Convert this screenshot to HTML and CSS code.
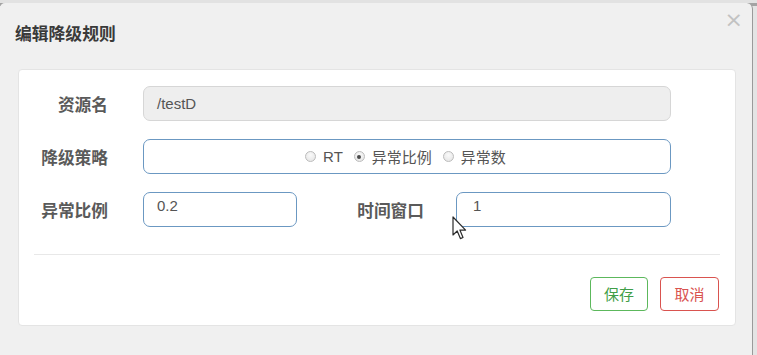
FILE: index.html
```html
<!DOCTYPE html>
<html lang="zh-CN">
<head>
<meta charset="utf-8">
<title>编辑降级规则</title>
<link rel="stylesheet" href="styles.css">
</head>
<body>
<div class="frame">
  <div class="dialog">
    <div class="header">
      <h4 class="title">编辑降级规则</h4>
      <span class="close">&times;</span>
    </div>
    <div class="panel">
      <div class="form">
        <div class="row">
          <label class="label">资源名</label>
          <div class="input disabled">/testD</div>
        </div>
        <div class="row">
          <label class="label">降级策略</label>
          <div class="input focus radios">
            <span class="radio"></span><span class="rtext">RT</span>
            <span class="radio checked"></span><span class="rtext">异常比例</span>
            <span class="radio"></span><span class="rtext">异常数</span>
          </div>
        </div>
        <div class="row">
          <label class="label">异常比例</label>
          <div class="input focus small top">0.2</div>
          <label class="label label2">时间窗口</label>
          <div class="input focus grow top">1</div>
        </div>
      </div>
      <div class="divider"></div>
      <div class="footer">
        <button class="btn save">保存</button>
        <button class="btn cancel">取消</button>
      </div>
    </div>
  </div>
  <svg class="cursor" width="16" height="25" viewBox="0 0 16 25">
    <path d="M1 1 L1 19 L5.2 15 L8.4 22.6 L11 21.5 L7.9 14.1 L13.6 14.1 Z" fill="#fff" stroke="#2b2b2b" stroke-width="1.2" stroke-linejoin="round"/>
  </svg>
</div>
</body>
</html>
```

FILE: styles.css
```css
* { box-sizing: border-box; }
html, body { margin: 0; padding: 0; }
body {
  width: 757px;
  height: 355px;
  overflow: hidden;
  background: #e2e2e2;
  font-family: "Liberation Sans", "Noto Sans CJK SC", sans-serif;
}
.frame {
  position: relative;
  width: 757px;
  height: 355px;
  background: linear-gradient(to bottom, #a3a3a3 0, #a3a3a3 3px, #e4e4e4 3px);
}
.dialog {
  position: relative;
  width: 753px;
  height: 352px;
  margin-top: 3px;
  background: #f0f0f0;
  border-right: 1px solid #9a9a9a;
  border-top-right-radius: 6px;
  border-top-left-radius: 5px;
}
.header {
  height: 66px;
  display: flex;
  align-items: center;
  padding-left: 15px;
  position: relative;
}
.title {
  margin: 0;
  margin-top: -6px;
  font-size: 16.8px;
  font-weight: 700;
  color: #3a3a3a;
}
.close {
  position: absolute;
  right: 9px;
  top: 4px;
  font-size: 22px;
  line-height: 26px;
  color: #c2c2c2;
  font-family: "DejaVu Sans", sans-serif;
}
.panel {
  margin: 0 16px 0 18px;
  height: 257px;
  background: #fff;
  border: 1px solid #e4e4e4;
  border-radius: 4px;
}
.form {
  padding: 16px 64px 0 0;
  display: flex;
  flex-direction: column;
  gap: 18px;
}
.row {
  display: flex;
  align-items: center;
}
.label {
  width: 89px;
  text-align: right;
  font-size: 16.7px;
  font-weight: 700;
  color: #5a5a5a;
  margin-right: 35px;
  padding-top: 1px;
}
.label2 {
  width: 127px;
  margin-right: 32px;
}
.input {
  flex: 1;
  height: 35px;
  border: 1px solid #d6d6d6;
  border-radius: 7px;
  padding: 0 13px;
  display: flex;
  align-items: center;
  font-size: 15px;
  color: #555;
}
.disabled {
  background: #eeeeee;
}
.focus {
  border-color: #6b98c2;
  background: #fff;
}
.top { padding-bottom: 8px; }
.small { flex: 0 0 154px; }
.grow { flex: 1; padding-left: 16px; }
.radios {
  justify-content: center;
  padding-right: 16px;
}
.radio {
  width: 11px;
  height: 11px;
  border-radius: 50%;
  border: 1px solid #bcbcbc;
  background: radial-gradient(circle at 50% 35%, #fafafa 0, #e2e2e2 100%);
  display: inline-flex;
  align-items: center;
  justify-content: center;
  margin-right: 7px;
}
.radio.checked::after {
  content: "";
  width: 4px;
  height: 4px;
  border-radius: 50%;
  background: #4a4a4a;
}
.rtext {
  margin-right: 11px;
  color: #555;
}
.rtext:last-child { margin-right: 0; }
.divider {
  height: 1px;
  background: #e8e8e8;
  margin: 27px 15px 0 15px;
}
.footer {
  display: flex;
  justify-content: flex-end;
  gap: 12px;
  padding: 22px 16px 0 0;
}
.btn {
  height: 34px;
  padding: 0;
  background: #fff;
  border: 1px solid;
  border-radius: 4px;
  font-size: 15px;
  font-family: "Liberation Sans", "Noto Sans CJK SC", sans-serif;
  line-height: 1;
  white-space: nowrap;
  text-align: center;
}
.save {
  width: 58px;
  border-color: #5cb85c;
  color: #3f9e48;
}
.cancel {
  width: 59px;
  border-color: #d9534f;
  color: #d9534f;
}
.cursor {
  position: absolute;
  left: 452px;
  top: 213px;
}
```
